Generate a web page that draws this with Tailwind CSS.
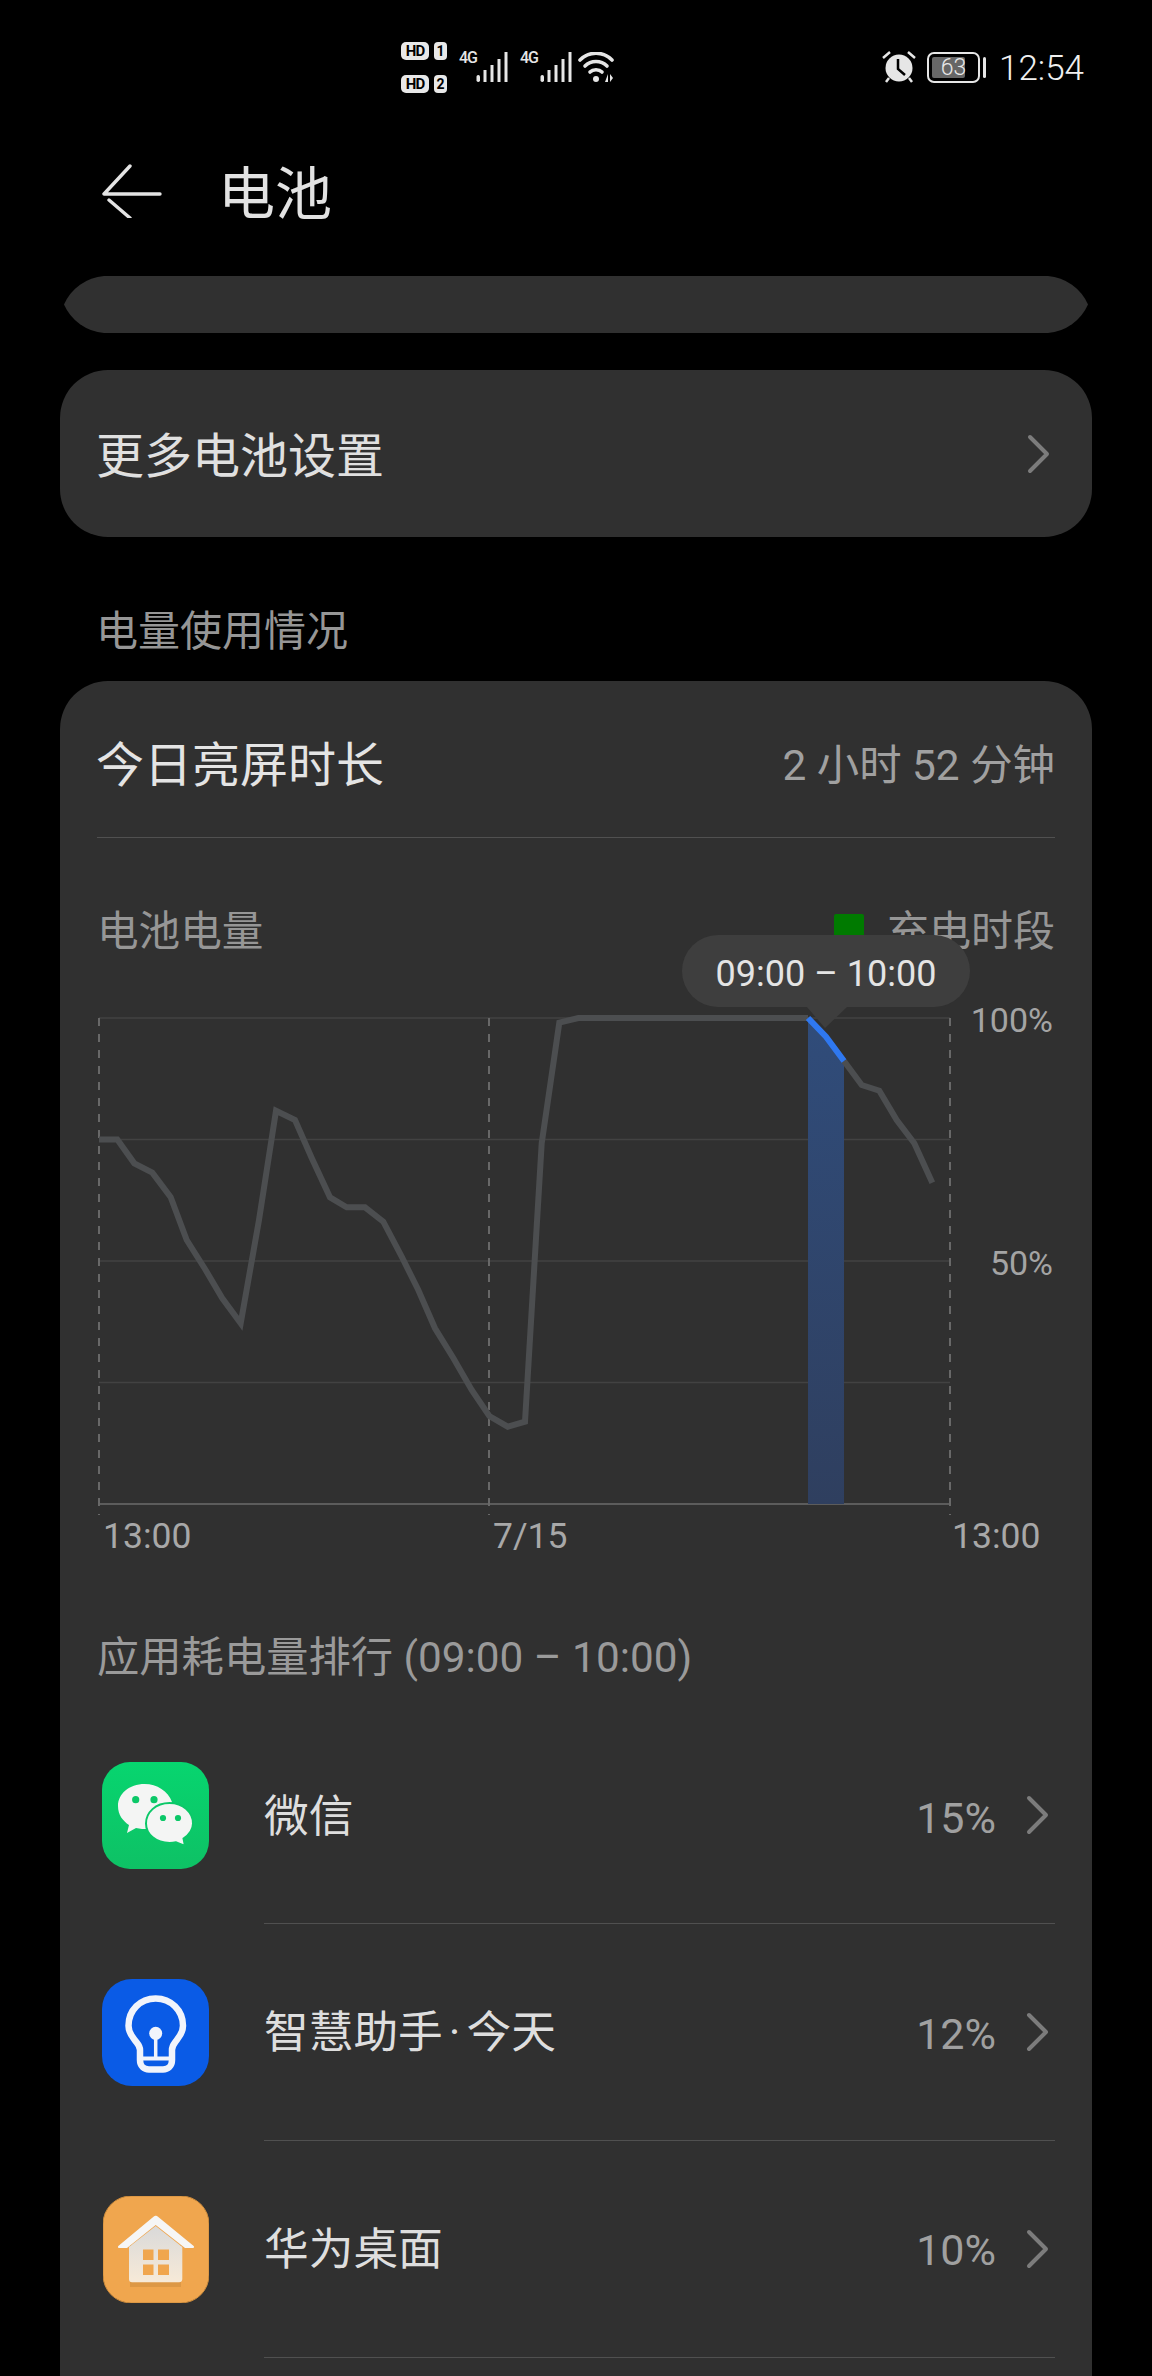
<!DOCTYPE html>
<html lang="zh">
<head>
  <meta charset="UTF-8">
  <title>电池</title>
  <script src="https://cdn.jsdelivr.net/npm/@tailwindcss/browser@4"></script>
</head>
<body class="bg-black font-['Roboto','Noto_Sans_CJK_SC',sans-serif] text-[#e0e0e0]">
<div class="w-[1152px] h-[2376px] overflow-hidden">

  <!-- Status bar -->
  <div class="h-[100px] flex items-start pt-[42px] pl-[401px] pr-[69px]">
    <div class="flex flex-col gap-[15px] w-[46px]">
      <div class="flex items-center justify-between">
        <span class="w-[28px] h-[18px] rounded-[5px] bg-[#e8e8e8] text-black text-[15px] leading-[18px] font-bold text-center tracking-[-1px]">HD</span>
        <span class="w-[13px] h-[18px] rounded-[4px] bg-[#e8e8e8] text-black text-[14px] leading-[18px] font-bold text-center">1</span>
      </div>
      <div class="flex items-center justify-between">
        <span class="w-[28px] h-[18px] rounded-[5px] bg-[#e8e8e8] text-black text-[15px] leading-[18px] font-bold text-center tracking-[-1px]">HD</span>
        <span class="w-[13px] h-[18px] rounded-[4px] bg-[#e8e8e8] text-black text-[14px] leading-[18px] font-bold text-center">2</span>
      </div>
    </div>
    <span class="ml-[12px] mt-[6px] w-[17px] text-[16px] leading-[20px] font-medium tracking-[-1px] text-[#e6e6e6]">4G</span>
    <svg class="mt-[10px]" width="32" height="30" viewBox="477 52 32 30" fill="#e6e6e6">
      <rect x="477.500" y="75" width="3.500" height="7" rx="1.700"/>
      <rect x="484.500" y="70" width="3" height="12"/>
      <rect x="491.500" y="65" width="3" height="17"/>
      <rect x="498.500" y="59" width="3" height="23"/>
      <rect x="505.500" y="52" width="3" height="30"/>
    </svg>
    <span class="ml-[12px] mt-[6px] w-[20px] text-[16px] leading-[20px] font-medium tracking-[-1px] text-[#e6e6e6]">4G</span>
    <svg class="mt-[10px]" width="32" height="30" viewBox="538 52 32 30" fill="#e6e6e6">
      <rect x="538.500" y="75" width="3.500" height="7" rx="1.700"/>
      <rect x="545.500" y="70" width="3" height="12"/>
      <rect x="552.500" y="65" width="3" height="17"/>
      <rect x="559.500" y="59" width="3" height="23"/>
      <rect x="566.500" y="52" width="3" height="30"/>
    </svg>
    <svg class="ml-[6px] mt-[10px]" width="36" height="30" viewBox="580 52 36 30" fill="#e6e6e6">
      <g fill="none" stroke="#e6e6e6" stroke-width="3.600" stroke-linecap="round">
        <path d="M582 60 C591 51 605 51 614 60"/>
        <path d="M587 66 C593 60 603 60 609 66"/>
        <path d="M592 72 C595 69 601 69 604 72"/>
      </g>
      <circle cx="598" cy="79" r="3"/>
      <path d="M607 82 L610 74 L610 82 Z M612 74 L615 78 L612 82 Z"/>
    </svg>
    <svg class="ml-auto mt-[9px]" width="34" height="32" viewBox="0 0 34 32" fill="#e6e6e6">
      <circle cx="17" cy="17" r="13.500"/>
      <path d="M1 7 L8 1 M33 7 L26 1 M7 27 L4 31 M27 27 L30 31" stroke="#e6e6e6" stroke-width="2.500" fill="none"/>
      <path d="M16 8 L16 18 L23 24" stroke="#000" stroke-width="2.500" fill="none"/>
    </svg>
    <div class="ml-[11px] mt-[10px] relative w-[53px] h-[31px] border-[2.500px] border-[#e6e6e6] rounded-[7px] p-[3px]">
      <div class="w-[33px] h-full bg-[#666666] rounded-[2px]"></div>
      <span class="absolute inset-0 text-center text-[#e8e8e8] text-[23px] leading-[27px] font-light">63</span>
    </div>
    <div class="ml-[3px] mt-[15px] w-[3px] h-[21px] bg-[#e6e6e6] rounded-full"></div>
    <span class="ml-[13px] mt-[6px] -mr-[1px] text-[35px] leading-[42px] font-light text-[#f0f0f0]">12:54</span>
  </div>

  <!-- Header -->
  <div class="h-[176px] flex items-start pl-[102px] pt-[64px]">
    <svg width="60" height="54" viewBox="101 165 60 54" fill="none" stroke="#e4e4e4" stroke-width="3.400" stroke-linecap="round" stroke-linejoin="round">
      <path d="M129 167 L103 195 L159 195"/>
      <path d="M108 201 L129 219"/>
    </svg>
    <h1 class="ml-[56px] -mt-[7px] text-[57px] leading-[76px] font-normal text-[#e2e2e2]">电池</h1>
  </div>

  <!-- Previous card, scrolled under the header -->
  <svg class="block ml-[63px]" width="1026" height="57" viewBox="63 276 1026 57" fill="#303030">
    <path d="M64 304.500 A48 48 0 0 1 104 276 L1048 276 A48 48 0 0 1 1088 304.500 A48 48 0 0 1 1048 333 L104 333 A48 48 0 0 1 64 304.500 Z"/>
  </svg>

  <!-- More settings -->
  <div class="mt-[37px] mx-[60px] h-[167px] rounded-[48px] bg-[#303030] flex items-center justify-between pl-[36px] pr-[42px]">
    <span class="mt-[6px] text-[48px] text-[#e0e0e0]">更多电池设置</span>
    <svg width="24" height="40" viewBox="0 0 24 40" fill="none" stroke="#7c7c7c" stroke-width="4" stroke-linecap="round" stroke-linejoin="round"><path d="M4 3 L21 20 L4 37"/></svg>
  </div>

  <div class="h-[144px] pl-[96px] pt-[67px] text-[42px] leading-[56px] text-[#969696]">电量使用情况</div>

  <!-- Usage card -->
  <div class="relative mx-[60px] h-[1800px] rounded-t-[48px] bg-[#303030]">
    <div class="mx-[37px] h-[157px] pt-[14px] flex items-center justify-between border-b border-[#505050]">
      <span class="-ml-[1px] text-[48px] text-[#e4e4e4]">今日亮屏时长</span>
      <span class="text-[42.400px] text-[#a0a0a0]">2 小时 52 分钟</span>
    </div>

    <div class="mx-[37px] h-[162px] pt-[70px] flex items-start">
      <span class="text-[41.600px] leading-[48px] text-[#969696]">电池电量</span>
      <span class="ml-auto mt-[6px] w-[30px] h-[30px] bg-[#007a00] rounded-[2px]"></span>
      <span class="ml-[23px] text-[42px] leading-[48px] text-[#969696]">充电时段</span>
    </div>

    <!-- Tooltip over the legend -->
    <div class="absolute left-[622px] top-[254px] w-[288px] h-[72px] pt-[5px] rounded-[36px] bg-[#3e3e3e] flex items-center justify-center text-[36px] text-[#e4e4e4]">09:00 – 10:00</div>

    <div class="ml-[37px] flex">
      <svg class="block" width="860" height="515" viewBox="97 1000 860 515" fill="none">
        <defs>
          <linearGradient id="band" x1="0" y1="0" x2="0" y2="1">
            <stop offset="0" stop-color="#304c7a"/>
            <stop offset="1" stop-color="#2f3f5f"/>
          </linearGradient>
        </defs>
        <g stroke="#424242" stroke-width="1.500">
          <path d="M99 1018 H950 M99 1139.500 H950 M99 1261 H950 M99 1382.500 H950"/>
        </g>
        <path d="M99 1504 H950" stroke="#5c5c5c" stroke-width="2"/>
        <g stroke="#686868" stroke-width="2" stroke-dasharray="8 8">
          <path d="M99 1018 V1515 M489 1018 V1515 M950 1018 V1515"/>
        </g>
        <path d="M808 1018 L826 1036.700 L844 1061 V1504 H808 Z" fill="url(#band)"/>
        <path d="M807 1007 L825 1028 L847 1007 Z" fill="#3e3e3e"/>
        <path d="M99 1139.500 L117.300 1139.500 L134.300 1163.300 L152.300 1172.700 L170.700 1197.300 L186.700 1240 L205 1269 L222.300 1298.300 L240.700 1323.300 L259 1220 L276 1110.700 L295 1120 L311.700 1158 L330 1197.300 L346.700 1207.300 L365 1207.300 L383.300 1221.700 L401.700 1256.700 L418.300 1290 L435 1328.300 L453.300 1358 L471.700 1390 L489.300 1416 L507.700 1426.700 L525 1421.700 L541.700 1143.300 L559.300 1022.700 L578.300 1018 L808 1018" stroke="#4c4e50" stroke-width="6" stroke-linejoin="miter"/>
        <path d="M844 1061 L861.700 1085 L879.300 1090.700 L896.700 1120 L914.300 1143.300 L932.300 1182.700" stroke="#4c4e50" stroke-width="6"/>
        <path d="M808 1018 L826 1036.700 L844 1061" stroke="#2f78f0" stroke-width="6"/>
      </svg>
      <div class="flex-1 pr-[39px] text-right text-[34px] leading-[40px] text-[#a4a4a4]">
        <div>100%</div>
        <div class="mt-[203px]">50%</div>
      </div>
    </div>

    <div class="ml-[37px] flex h-[40px] pt-[1px] text-[35.500px] leading-[40px] text-[#a8a8a8]">
      <span class="w-[396px] pl-[6px]">13:00</span>
      <span class="w-[459px]">7/15</span>
      <span>13:00</span>
    </div>

    <div class="h-[152px] pl-[37px] pt-[54px] text-[42.300px] leading-[98px] text-[#9a9a9a]">应用耗电量排行 (09:00 – 10:00)</div>

    <!-- App rows -->
    <div class="flex h-[216px] pl-[42px] items-center">
      <svg class="shrink-0" width="107" height="107" viewBox="0 0 107 107">
        <defs>
          <linearGradient id="wx" x1="0" y1="0" x2="0" y2="1">
            <stop offset="0" stop-color="#07d56f"/>
            <stop offset="1" stop-color="#0ec165"/>
          </linearGradient>
        </defs>
        <rect width="107" height="107" rx="28" fill="url(#wx)"/>
        <path d="M42.700 22 C27 22 16 32 16 44 C16 53 21 59 27 63 L25 71 L34 66 C38 67 42 67 46 67 L70 40 C66 29 55 22 42.700 22 Z" fill="#f4f5f4"/>
        <circle cx="33.700" cy="37.700" r="3.600" fill="#0bc868"/>
        <circle cx="52" cy="37.700" r="3.600" fill="#0bc868"/>
        <path d="M67.700 41 C53.500 41 44 50.500 44 61.500 C44 72.500 54 81 67.700 81 C70 81 72 80.700 74 80.200 L83 84 L81.500 76.500 C87.500 72.500 91 67.500 91 61.500 C91 50.500 81 41 67.700 41 Z" fill="#f4f5f4" stroke="#0bc868" stroke-width="2"/>
        <circle cx="61" cy="56" r="3.100" fill="#0bc868"/>
        <circle cx="76" cy="56" r="3.100" fill="#0bc868"/>
      </svg>
      <span class="ml-[55px] mt-[6px] text-[44.700px] text-[#dedede]">微信</span>
      <span class="ml-auto mt-[6px] text-[43px] text-[#a0a0a0]">15%</span>
      <svg class="ml-[29px] mr-[43px]" width="24" height="40" viewBox="0 0 24 40" fill="none" stroke="#7c7c7c" stroke-width="4" stroke-linecap="round" stroke-linejoin="round"><path d="M4 3 L21 20 L4 37"/></svg>
    </div>
    <div class="ml-[204px] mr-[37px] border-t border-[#505050]"></div>

    <div class="flex h-[216px] pl-[42px] items-center">
      <svg class="shrink-0" width="107" height="107" viewBox="0 0 107 107">
        <rect width="107" height="107" rx="30" fill="#0a5be6"/>
        <path d="M38 76 V71 C38 66 35 64.500 32 60 C28 55 26.500 51 26.500 46.700 C26.500 31.500 38 19.500 53.700 19.500 C69 19.500 81 31.500 81 46.700 C81 51 79.500 55 75.500 60 C72.500 64.500 70 66 70 71 V81 C70 87 66 90.500 61 90.500 H47 C42 90.500 38 87 38 81 Z" fill="none" stroke="#f1f4fb" stroke-width="6.500" stroke-linejoin="round"/>
        <path d="M38 79.500 H70" stroke="#f1f4fb" stroke-width="4"/>
        <path d="M53.700 54 V80" stroke="#f1f4fb" stroke-width="3.500"/>
        <circle cx="53.700" cy="54.300" r="6.500" fill="#f1f4fb"/>
      </svg>
      <span class="ml-[55px] mt-[4px] text-[44.700px] text-[#dedede]">智慧助手<span class="mx-[6px]">·</span>今天</span>
      <span class="ml-auto mt-[4px] text-[43px] text-[#a0a0a0]">12%</span>
      <svg class="ml-[29px] mr-[43px]" width="24" height="40" viewBox="0 0 24 40" fill="none" stroke="#7c7c7c" stroke-width="4" stroke-linecap="round" stroke-linejoin="round"><path d="M4 3 L21 20 L4 37"/></svg>
    </div>
    <div class="ml-[204px] mr-[37px] border-t border-[#505050]"></div>

    <div class="flex h-[216px] pl-[43px] items-center">
      <svg class="shrink-0" width="106" height="107" viewBox="0 0 106 107">
        <defs>
          <linearGradient id="wall" x1="0" y1="0" x2="0" y2="1">
            <stop offset="0" stop-color="#d9d9d9"/>
            <stop offset="1" stop-color="#f7ead8"/>
          </linearGradient>
        </defs>
        <rect width="106" height="107" rx="28" fill="#f0a64e" stroke="#c98a3c" stroke-width="1"/>
        <path d="M27 91 H78 L78 49 H27 Z" fill="#c98a3c" opacity="0.500"/>
        <path d="M26 51 L52.700 30 L79.300 51 V83 C79.300 85 78 86.300 76 86.300 H29 C27 86.300 26 85 26 83 Z" fill="url(#wall)"/>
        <path d="M52.700 19.700 C53.500 19.700 54 20 55 20.800 L90.700 50 C91.500 51 91 52 90 52 H82 L52.700 29 L24 52 H16 C15 52 14.500 51 15.300 50 L50.500 20.800 C51.500 20 52 19.700 52.700 19.700 Z" fill="#f6f6f6"/>
        <g fill="#f0a64e">
          <rect x="40" y="53.500" width="10.500" height="10.500"/>
          <rect x="55" y="53.500" width="11" height="10.500"/>
          <rect x="40" y="68.500" width="10.500" height="10.500"/>
          <rect x="55" y="68.500" width="11" height="10.500"/>
        </g>
      </svg>
      <span class="ml-[55px] mt-[3px] text-[44.700px] text-[#dedede]">华为桌面</span>
      <span class="ml-auto mt-[3px] text-[43px] text-[#a0a0a0]">10%</span>
      <svg class="ml-[29px] mr-[43px]" width="24" height="40" viewBox="0 0 24 40" fill="none" stroke="#7c7c7c" stroke-width="4" stroke-linecap="round" stroke-linejoin="round"><path d="M4 3 L21 20 L4 37"/></svg>
    </div>
    <div class="ml-[204px] mr-[37px] border-t border-[#505050]"></div>
  </div>
</div>
</body>
</html>
